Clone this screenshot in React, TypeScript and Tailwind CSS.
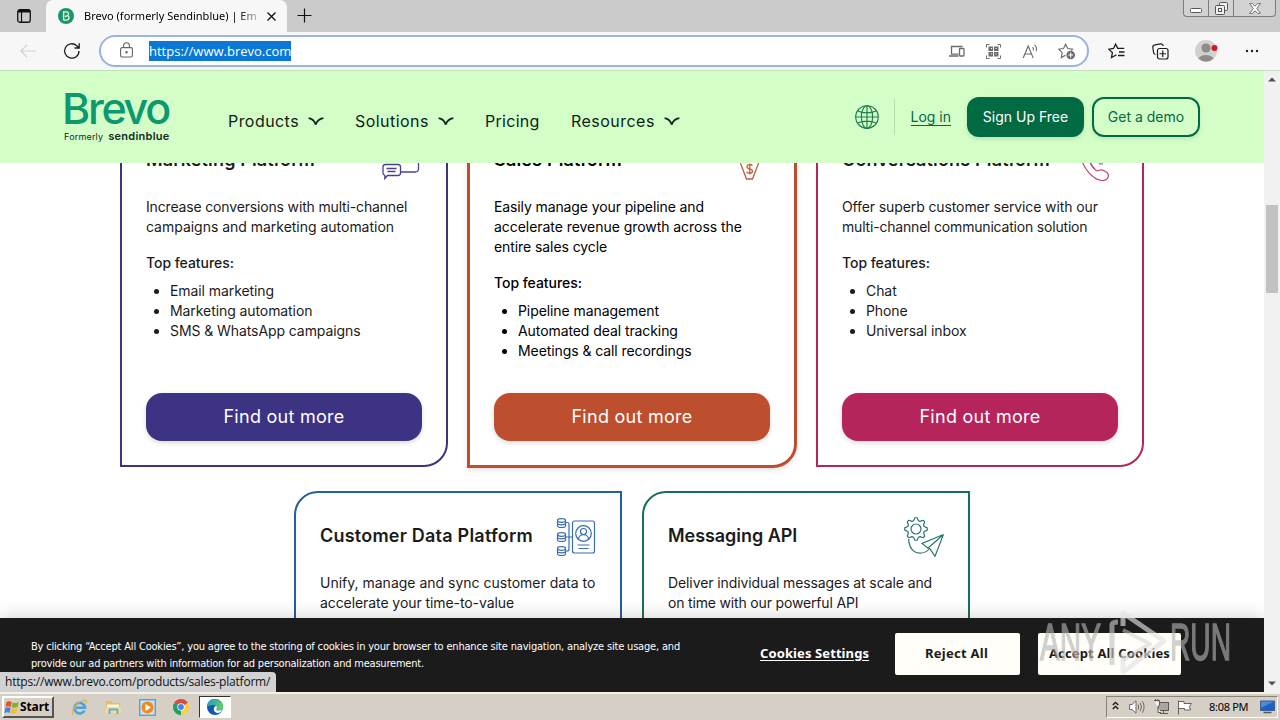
import type { ReactNode } from "react";

/* ---------- browser chrome ---------- */

function TabStrip() {
  return (
    <div className="flex h-[32px] items-start bg-[#cbcbcb]">
      <div className="flex h-full w-[46px] items-center justify-center">
        <svg width="14" height="14" viewBox="0 0 14 14" fill="none" stroke="#111" className="ml-[2px]">
          <rect x="0.75" y="0.75" width="12.5" height="12.5" rx="2" strokeWidth="1.3" />
          <path d="M1 2.2h12" strokeWidth="2.6" />
          <path d="M4.5 3v10" strokeWidth="1.2" />
        </svg>
      </div>
      <div className="flex h-full w-[241px] items-center rounded-t-[7px] bg-[#f7f7f7] pl-[12px]">
        <svg width="16" height="16" viewBox="0 0 16 16" className="shrink-0">
          <circle cx="8" cy="8" r="8" fill="#1a9765" />
          <path
            d="M5.6 12.2V3.9h3a1.9 1.9 0 0 1 1.2 3.4L7 8.6M9.6 7.5a2.4 2.4 0 0 1-1 4.6h-3"
            fill="none"
            stroke="#e9fbe9"
            strokeWidth="1.4"
          />
        </svg>
        <span className="ml-[10px] w-[175px] overflow-hidden whitespace-nowrap bg-linear-to-r from-black from-88% to-black/20 bg-clip-text font-['Noto_Sans',sans-serif] text-[11px] leading-[16px] text-transparent">
          Brevo (formerly Sendinblue) | Em
        </span>
        <svg width="9" height="9" viewBox="0 0 9 9" className="ml-[8px]" stroke="#111" strokeWidth="1.3">
          <path d="M.5.5l8 8M8.5.5l-8 8" />
        </svg>
      </div>
      <svg width="15" height="15" viewBox="0 0 15 15" className="mt-[8px] ml-[10px]" stroke="#111" strokeWidth="1.2">
        <path d="M7.5.5v14M.5 7.5h14" />
      </svg>
      <div className="mr-[4px] ml-auto flex h-[17px] w-[93px] rounded-b-[4px] border border-t-0 border-[#7c7c7c] bg-[#d2d2d2]">
        <div className="flex w-[25px] items-end justify-center border-r border-[#7c7c7c] pb-[3px]">
          <svg width="12" height="5" viewBox="0 0 12 5" fill="#fff" stroke="#555">
            <rect x="0.5" y="0.5" width="11" height="4" rx="1" />
          </svg>
        </div>
        <div className="flex w-[25px] items-center justify-center border-r border-[#7c7c7c]">
          <svg width="13" height="13" viewBox="0 0 13 13" fill="#eee" stroke="#555">
            <rect x="4.5" y="0.5" width="8" height="8" rx="1" />
            <rect x="0.5" y="3.5" width="9" height="9" rx="1" />
            <rect x="3.5" y="6.5" width="3" height="3" />
          </svg>
        </div>
        <div className="flex flex-1 items-center justify-center">
          <svg width="12" height="11" viewBox="0 0 12 11" fill="#fff" stroke="#666" strokeWidth="0.9">
            <path d="M.6.6h3L6 3.3 8.4.6h3L7.7 5.5l3.7 4.9h-3L6 7.7 3.6 10.400h-3l3.700-4.900z" />
          </svg>
        </div>
      </div>
    </div>
  );
}

function Toolbar() {
  return (
    <div className="flex h-[39px] items-center border-b border-[#c3dfba] bg-[#f7f7f7]">
      <svg width="16" height="14" viewBox="0 0 16 14" className="ml-[20px]" fill="none" stroke="#cfcfcf" strokeWidth="1.2">
        <path d="M7 .8L.9 7 7 13.2M1 7h15" />
      </svg>
      <svg width="18" height="18" viewBox="0 0 18 18" className="ml-[27px]" fill="none" stroke="#1c1c1c" strokeWidth="1.3">
        <path d="M16 9a7.2 7.2 0 1 1-2.3-5.300L16 5.800M16.200 1.300v4.700h-4.700" />
      </svg>
      <div className="ml-[18px] flex h-[32px] w-[990px] items-center rounded-full border-2 border-[#9cb3dc] bg-white pl-[19px]">
        <svg width="13" height="16" viewBox="0 0 13 16" className="-mt-[2px]" fill="none" stroke="#666" strokeWidth="1.1">
          <rect x="0.6" y="5.6" width="11.8" height="9.4" rx="1.5" />
          <path d="M3.6 5.5V3.6a2.900 2.900 0 0 1 5.800 0v1.900" />
          <circle cx="6.500" cy="10.300" r="0.700" fill="#666" />
        </svg>
        <span className="ml-[16px] h-[20px] bg-[#0a78d4] font-['Open_Sans','Noto_Sans',sans-serif] text-[13px] leading-[20px] text-white">
          https://www.brevo.com
        </span>
        <div className="mr-[11px] ml-auto flex items-center text-[#6b6b6b]">
          <svg width="16" height="12" viewBox="0 0 16 12" fill="none" stroke="currentColor" strokeWidth="1.3">
            <path d="M9.500 9.200H2.500V1.500h11M0 11h9.500" />
            <rect x="10.500" y="3.500" width="4.500" height="7.500" rx="0.800" />
          </svg>
          <svg width="15" height="15" viewBox="0 0 15 15" className="ml-[21px]" fill="none" stroke="currentColor">
            <path d="M.500 3.500v-3h3M11.500.500h3v3M14.500 11.500v3h-3M3.500 14.500h-3v-3" strokeWidth="1" />
            <path d="M2.500 2.500h4.500v4.500H2.500zM8 2.500h4.500v4.500H8zM2.500 8h4.500v4.500H2.500zM8 8h4.500v4.500H8z" fill="currentColor" stroke="none" />
            <path d="M5 4.500h1M9.500 4.500h1M5 10h1M9.500 10h1" stroke="#fff" />
          </svg>
          <svg width="17" height="15" viewBox="0 0 17 15" className="ml-[21px]" fill="none" stroke="currentColor" strokeWidth="1.100">
            <path d="M1.200 14L6.200 2 11.200 14M3 10h6.500M10.500 3.200q1.500 1.500.800 3.300M12.500.800q3 2.800 1.600 6.400" />
          </svg>
          <svg width="18" height="17" viewBox="0 0 18 17" className="ml-[19px]" fill="none" stroke="currentColor" strokeWidth="1.100">
            <path d="M7.500 12.200l-4.200 2.400.9-4.900L.800 6.200l4.700-.700L7.600 1.200l2.100 4.300 4.900.700-1.200 1.300" />
            <circle cx="12.700" cy="12" r="4.300" fill="currentColor" stroke="none" />
            <path d="M12.700 9.600v4.800M10.300 12h4.800" stroke="#fff" />
          </svg>
        </div>
      </div>
      <svg width="17" height="16" viewBox="0 0 17 16" className="ml-[19px]" fill="none" stroke="#1c1c1c" strokeWidth="1.300">
        <path d="M8.500 11.800L3.500 14.500l.9-4.900L.900 6.200l4.600-.700L7.600 1.200l2.100 4.200h6.500M11 9h5.500M10 12.500h6.500" />
      </svg>
      <svg width="17" height="17" viewBox="0 0 17 17" className="ml-[27px]" fill="none" stroke="#1c1c1c" strokeWidth="1.200">
        <path d="M3.500 11.500A2.500 2.500 0 0 1 1.500 9L.800 4.500A2.500 2.500 0 0 1 3 1.800L8.500.900A2.500 2.500 0 0 1 11.300 3" />
        <rect x="5.500" y="5.500" width="10.500" height="10.500" rx="2" />
        <path d="M10.750 7.500v6.500M7.500 10.750h6.500" />
      </svg>
      <svg width="24" height="22" viewBox="0 0 24 22" className="ml-[26px]">
        <circle cx="11" cy="11" r="11" fill="#d3d1cf" />
        <circle cx="11" cy="8" r="4.600" fill="#8e8b89" />
        <path d="M3.500 18.500a8 5.500 0 0 1 15 0A11 11 0 0 1 3.500 18.500z" fill="#8e8b89" />
        <circle cx="19.500" cy="8" r="3" fill="#d81324" />
      </svg>
      <svg width="14" height="4" viewBox="0 0 14 4" className="ml-[26px]" fill="#1c1c1c">
        <circle cx="2" cy="2" r="1.200" />
        <circle cx="7" cy="2" r="1.200" />
        <circle cx="12" cy="2" r="1.200" />
      </svg>
    </div>
  );
}

function Scrollbar() {
  return (
    <div className="flex w-[16px] shrink-0 flex-col items-center bg-[#f1f1f1]">
      <svg width="8" height="5" viewBox="0 0 8 5" className="mt-[6px]">
        <path d="M0 4.500L4 .500l4 4z" fill="#505050" />
      </svg>
      <div className="mt-[123px] h-[88px] w-[12px] bg-[#c1c1c1]" />
      <svg width="8" height="5" viewBox="0 0 8 5" className="mt-auto mb-[6px]">
        <path d="M0 .500L4 4.500l4-4z" fill="#505050" />
      </svg>
    </div>
  );
}

/* ---------- site header ---------- */

function Chevron() {
  return (
    <svg width="16" height="9" viewBox="0 0 16 9" className="mt-[1px] ml-[9px]" fill="none" stroke="#0a2a1c" strokeWidth="1.700">
      <path d="M.600 1.100C4.500 1.700 6.700 4 7.700 7.800M15.400 1.100C11.500 1.700 8.800 4 7.700 7.800" />
    </svg>
  );
}

function SiteHeader() {
  return (
    <header className="relative z-10 flex h-[92px] shrink-0 bg-[#d4fec8] font-['Inter',sans-serif]">
      <div className="ml-[64px] w-[110px] pt-[22px] whitespace-nowrap">
        <div className="-ml-[2px] h-[37px] text-[43px] leading-[31px] font-medium tracking-[-2.300px] text-[#0b996e]">Brevo</div>
        <div className="flex items-baseline gap-[5px] text-[#122a1e]">
          <span className="text-[9px] leading-[12px] tracking-[0.180px]">Formerly</span>
          <span className="text-[11px] leading-[12px] font-semibold tracking-[0.260px]">sendinblue</span>
        </div>
      </div>
      <nav className="ml-[54px] flex h-full items-center pt-[7px] text-[16px] text-[#0c1f15]">
        <a className="flex w-[127px] items-center tracking-[0.440px]">Products<Chevron /></a>
        <a className="flex w-[130px] items-center tracking-[0.450px]">Solutions<Chevron /></a>
        <a className="w-[86px] tracking-[0.280px]">Pricing</a>
        <a className="flex items-center tracking-[0.470px]">Resources<Chevron /></a>
      </nav>
      <div className="mr-[64px] ml-auto flex items-center text-[14px] text-[#006a43]">
        <svg width="24" height="24" viewBox="0 0 24 24" fill="none" stroke="#1d7d50" strokeWidth="1.150">
          <circle cx="12" cy="12" r="11.300" />
          <ellipse cx="12" cy="12" rx="5.600" ry="11.300" />
          <path d="M.700 12h22.600M12 .700v22.600M2.600 6q9.400 3.600 18.800 0M2.600 18q9.400-3.600 18.800 0" />
        </svg>
        <div className="ml-[15px] h-[36px] w-px bg-[#b5dfae]" />
        <a className="ml-[16px] h-[18px] border-b border-[#006a43] leading-[18px]">Log in</a>
        <button className="ml-[16px] h-[40px] w-[117px] rounded-[12px] bg-[#006a43] pb-px text-white shadow-[0_2px_4px_rgba(0,60,30,0.15)]">
          Sign Up Free
        </button>
        <button className="ml-[8px] h-[40px] w-[108px] rounded-[12px] border-2 border-[#006a43] pb-px shadow-[0_2px_4px_rgba(0,60,30,0.12)]">
          Get a demo
        </button>
      </div>
    </header>
  );
}

/* ---------- product cards ---------- */

function Card({
  className,
  title,
  titleClass,
  icon,
  text,
  features,
  buttonClass,
}: {
  className: string;
  title: string;
  titleClass: string;
  icon: ReactNode;
  text: [string, string][];
  features?: string[];
  buttonClass?: string;
}) {
  return (
    <article className={`flex shrink-0 flex-col bg-white p-[24px] text-[14px] leading-[20px] text-[#1b1b1b] ${className}`}>
      <div className="flex h-[40px] shrink-0 items-center justify-between">
        <h3 className={`-mt-[2px] text-[18px] font-semibold whitespace-nowrap ${titleClass}`}>{title}</h3>
        {icon}
      </div>
      <p className="mt-[16px] whitespace-nowrap">
        {text.map(([line, tracking]) => (
          <span key={line} className={`block ${tracking}`}>{line}</span>
        ))}
      </p>
      {features && (
        <>
          <p className="mt-[16px] font-medium tracking-[-0.040px]">Top features:</p>
          <ul className="mt-[8px] list-disc pl-[24px] tracking-[-0.080px]">
            {features.map((f) => (
              <li key={f}>{f}</li>
            ))}
          </ul>
          <button className={`mt-auto h-[48px] shrink-0 rounded-[16px] text-[18px] tracking-[0.260px] text-white shadow-[0_2px_5px_rgba(0,0,0,0.15)] ${buttonClass}`}>
            Find out more
          </button>
        </>
      )}
    </article>
  );
}

const iconProps = { width: 40, height: 40, viewBox: "0 0 40 40", fill: "none", strokeWidth: 1.3 };

const ChatIcon = () => (
  <svg {...iconProps} stroke="#4a4090">
    <path d="M19 31H33.500a3 3 0 0 0 3-3V8a4 4 0 0 0-4-4H10a4 4 0 0 0-4 4v12" />
    <path d="M3.500 23.500h12.500a2.500 2.500 0 0 1 2.500 2.500v6a2.500 2.500 0 0 1-2.500 2.500H5.500l-2.700 3v-3.200a2.500 2.500 0 0 1-1.800-2.300v-6a2.500 2.500 0 0 1 2.500-2.500zM4.500 27.500h10M5.500 30.500h8" />
  </svg>
);

const TieIcon = () => (
  <svg {...iconProps} stroke="#c05f42">
    <path d="M8.500 17l8 21h6L30.500 17" />
    <path d="M22.500 24.500c-1-1.500-5.500-1.500-5.500 1.200 0 3 5.500 1.500 5.500 4.500 0 2.600-5 2.600-5.800.500M19.800 22.500v11" />
  </svg>
);

const PhoneIcon = () => (
  <svg {...iconProps} stroke="#bd4270" strokeWidth={1.200}>
    <path d="M3 16C5 27 15 39.500 25 39.500c3.500 0 6-3.200 5.300-6-1-2.200-6-5.500-8.500-4.500-1.500.500-1.800 1.500-3.500.500-3-2-5.500-6-6.500-10" />
    <path d="M11 19c1 3.500 3 6.500 5.500 8.500M20 20l2 3h3" />
  </svg>
);

const DataIcon = () => (
  <svg {...iconProps} stroke="#3a6fae" strokeWidth={1.200}>
    {[6, 20, 34].map((y) => (
      <g key={y}>
        <ellipse cx="5.500" cy={y - 2.500} rx="4" ry="1.800" />
        <path d={`M1.500 ${y - 2.500}v5.200c0 2.400 8 2.400 8 0v-5.200M1.500 ${y}c0 2.400 8 2.400 8 0`} />
      </g>
    ))}
    <path d="M9.500 5.500h1.500a2 2 0 0 1 2 2v24.500a2 2 0 0 1-2 2H9.500M9.500 20H16" />
    <rect x="16.500" y="4" width="22" height="32" rx="2" />
    <circle cx="27.500" cy="16.500" r="7.800" />
    <circle cx="27.500" cy="14.500" r="3" />
    <path d="M22.500 22.500c0-6.500 10-6.500 10 0M21.500 28h12M22.500 31.500h10" />
  </svg>
);

const gear = Array.from({ length: 32 }, (_, i) => {
  const r = i % 4 < 2 ? 11.3 : 8.6;
  const a = ((i - 0.5) / 32) * Math.PI * 2 - Math.PI / 2;
  return `${(12 + r * Math.cos(a)).toFixed(2)},${(12 + r * Math.sin(a)).toFixed(2)}`;
}).join(" ");

const ApiIcon = () => (
  <svg {...iconProps} stroke="#2b7673" strokeWidth={1.200}>
    <polygon points={gear} strokeLinejoin="round" />
    <circle cx="12" cy="12" r="5" />
    <path d="M4.800 22v2.500c1 8 6 11.700 11.200 11.700q6 0 10-5.200" />
    <path d="M39.500 17.500L18 26.500l6 4.500zM39.500 17.500L24 31v1M39.500 17.500L31 39.300l-5-7.500" />
  </svg>
);

function Cards() {
  return (
    <section className="h-[529px] shrink-0 overflow-hidden bg-white font-['Inter',sans-serif]">
      <div className="-mt-[48px] ml-[120px] flex items-start gap-[20px]">
        <Card
          className="h-[352px] w-[328px] rounded-tl-[24px] rounded-br-[24px] border-2 border-[#3d3383]"
          title="Marketing Platform"
          titleClass="tracking-[0.150px]"
          icon={<ChatIcon />}
          text={[
            ["Increase conversions with multi-channel", "tracking-[-0.160px]"],
            ["campaigns and marketing automation", "tracking-[-0.020px]"],
          ]}
          features={["Email marketing", "Marketing automation", "SMS & WhatsApp campaigns"]}
          buttonClass="bg-[#3d3383]"
        />
        <Card
          className="-m-px h-[354px] w-[330px] rounded-tl-[24px] rounded-br-[24px] border-[3px] border-[#be4f2e] text-black shadow-[0_2px_5px_rgba(0,0,0,0.12)]"
          title="Sales Platform"
          titleClass="tracking-[0.180px]"
          icon={<TieIcon />}
          text={[
            ["Easily manage your pipeline and", "tracking-[-0.110px]"],
            ["accelerate revenue growth across the", "tracking-[-0.050px]"],
            ["entire sales cycle", "tracking-[-0.080px]"],
          ]}
          features={["Pipeline management", "Automated deal tracking", "Meetings & call recordings"]}
          buttonClass="bg-[#be4f2e]"
        />
        <Card
          className="h-[352px] w-[328px] rounded-tl-[24px] rounded-br-[24px] border-2 border-[#b5245b]"
          title="Conversations Platform"
          titleClass="tracking-[0.170px]"
          icon={<PhoneIcon />}
          text={[
            ["Offer superb customer service with our", "tracking-[-0.110px]"],
            ["multi-channel communication solution", "tracking-[-0.190px]"],
          ]}
          features={["Chat", "Phone", "Universal inbox"]}
          buttonClass="bg-[#b5245b]"
        />
      </div>
      <div className="mt-[24px] ml-[294px] flex items-start gap-[20px]">
        <Card
          className="h-[352px] w-[328px] rounded-tl-[24px] border-2 border-[#23609f]"
          title="Customer Data Platform"
          titleClass="tracking-[0.220px]"
          icon={<DataIcon />}
          text={[
            ["Unify, manage and sync customer data to", "tracking-[0px]"],
            ["accelerate your time-to-value", "tracking-[-0.080px]"],
          ]}
        />
        <Card
          className="h-[352px] w-[328px] rounded-tl-[24px] border-2 border-[#17705f]"
          title="Messaging API"
          titleClass="tracking-[-0.050px]"
          icon={<ApiIcon />}
          text={[
            ["Deliver individual messages at scale and", "tracking-[-0.100px]"],
            ["on time with our powerful API", "tracking-[-0.170px]"],
          ]}
        />
      </div>
    </section>
  );
}

/* ---------- overlays ---------- */

function CookieBanner() {
  return (
    <div className="absolute bottom-0 left-0 z-20 flex h-[74px] w-full bg-[#1b1b1b] shadow-[0_0_18px_rgba(0,0,0,0.2)]">
      <p className="ml-[31px] w-[670px] pt-[20px] font-['DejaVu_Sans_Condensed','DejaVu_Sans',sans-serif] text-[11px] leading-[17px] whitespace-nowrap text-white">
        <span className="block tracking-[-0.184px]">
          By clicking “Accept All Cookies”, you agree to the storing of cookies in your browser to enhance site navigation, analyze site usage, and
        </span>
        <span className="block tracking-[-0.210px]">
          provide our ad partners with information for ad personalization and measurement.
        </span>
      </p>
      <div className="ml-[59px] flex h-[71px] items-center font-['Noto_Sans',sans-serif] text-[13px] leading-[15px] font-bold">
        <a className="w-[135px] tracking-[0.100px] text-white underline underline-offset-2">Cookies Settings</a>
        <button className="h-[42px] w-[125px] rounded-[2px] bg-[#fffef9] pr-[2px] tracking-[0.280px] text-[#1b1b1b]">Reject All</button>
        <button className="ml-[18px] h-[42px] w-[143px] rounded-[2px] bg-[#fffef9] tracking-[0.150px] text-[#1b1b1b]">
          Accept All Cookies
        </button>
      </div>
    </div>
  );
}

function Watermark() {
  return (
    <svg width="200" height="70" viewBox="0 0 200 70" className="pointer-events-none absolute top-[606px] left-[1036px] z-30">
      <g fill="#b4b4b4" stroke="#b4b4b4" strokeWidth="1.600" opacity="0.620" fontFamily="'Liberation Sans', sans-serif" fontSize="51">
        <text x="4" y="54" textLength="61" lengthAdjust="spacingAndGlyphs">ANY</text>
        <text x="134" y="54" textLength="61" lengthAdjust="spacingAndGlyphs">RUN</text>
      </g>
      <g fill="none" strokeLinejoin="round">
        <path d="M76 59V19q0-3 6-3" stroke="#c4c4c4" strokeOpacity="0.650" strokeWidth="5" />
        <path d="M87 20V7l41 28-41 31V47" stroke="#e2e2e2" strokeOpacity="0.650" strokeWidth="5" />
        <path d="M87 24l27 14-27 16" stroke="#cfcfcf" strokeOpacity="0.500" strokeWidth="4" />
      </g>
    </svg>
  );
}

/* ---------- taskbar ---------- */

function Taskbar() {
  return (
    <footer className="flex h-[28px] items-center border-t-2 border-[#f3f1ec] bg-[#d6cfc6]">
      <div className="ml-[2px] flex h-[22px] w-[52px] items-center border-2 border-t-white border-r-[#555] border-b-[#555] border-l-white bg-[#d6cfc6]">
        <svg width="16" height="15" viewBox="0 0 16 15">
          <path d="M2.500 2Q5 .500 7.600 2L6.700 7Q4 5.600 1.500 7z" fill="#e2562a" />
          <path d="M8.600 2.500q3 1.300 6-.500l-1 5q-3 1.500-6 .200z" fill="#7fb52e" />
          <path d="M1.300 8q2.600-1.500 5.200 0L5.600 13Q3 11.600.400 13z" fill="#3f86d6" />
          <path d="M7.500 8.200q3 1.400 6-.100l-1 5q-3 1.500-6 .300z" fill="#f5c02a" />
        </svg>
        <span className="font-['Noto_Sans',sans-serif] text-[12px] leading-[16px] font-bold tracking-[-0.120px] text-black">Start</span>
      </div>
      <svg width="17" height="17" viewBox="0 0 17 17" className="ml-[17px]" fill="none">
        <path d="M13.500 11.500a5.300 5.300 0 1 1 .500-2.800H5" stroke="#4aa3dc" strokeWidth="2.500" />
        <path d="M2.500 15.500C-1 13 5 4 12 1.500c3-1 4 .500 2.800 3" stroke="#e3b13c" strokeWidth="1.300" />
      </svg>
      <svg width="17" height="16" viewBox="0 0 17 16" className="ml-[17px]">
        <path d="M1 2h6l1 2h7v10H1z" fill="#e0c070" />
        <path d="M2 5.500h12V8H2z" fill="#fdf6d8" />
        <path d="M1 8h15v6H1z" fill="#f4dc8c" />
        <path d="M4.500 15v-4.500h8V15" fill="none" stroke="#63aee3" strokeWidth="2" />
      </svg>
      <svg width="17" height="17" viewBox="0 0 17 17" className="ml-[17px]">
        <rect x="0.700" y="0.700" width="15.600" height="15.600" fill="#c9e0f3" stroke="#5b9bd3" strokeWidth="1.300" />
        <circle cx="8.500" cy="8.500" r="6" fill="#f08a1d" />
        <path d="M6.500 5v7l5.500-3.500z" fill="#fff" />
      </svg>
      <svg width="16" height="16" viewBox="0 0 16 16" className="ml-[17px]">
        <path d="M8 8L1.070 4A8 8 0 0 1 14.930 4z" fill="#dd4b3e" />
        <path d="M8 8V16A8 8 0 0 1 1.070 4z" fill="#1ba261" />
        <path d="M8 8L14.930 4A8 8 0 0 1 8 16z" fill="#fdd03b" />
        <circle cx="8" cy="8" r="3.700" fill="#fff" />
        <circle cx="8" cy="8" r="2.900" fill="#4285f4" />
      </svg>
      <div className="ml-[10px] flex h-[22px] w-[32px] items-center justify-center border border-t-[#333] border-r-white border-b-white border-l-[#333] bg-[#fdfdfc]">
        <svg width="16" height="16" viewBox="0 0 16 16">
          <defs>
            <linearGradient id="edgeTop" x1="0" y1="0" x2="1" y2="0.500">
              <stop offset="0" stopColor="#1c93d8" />
              <stop offset="1" stopColor="#5fd25a" />
            </linearGradient>
          </defs>
          <circle cx="8" cy="8" r="8" fill="#0d5bb0" />
          <path d="M0 8a8 8 0 0 1 16-.500c0 3-2.500 4-4.600 4-1.800 0-2.400-.600-2-1.300C10.500 8.500 9.500 6 7 6 3.500 6 .500 7 0 8z" fill="url(#edgeTop)" />
          <path d="M9.200 6.800c1.200 1.200.600 2.700.200 3.300-.300.900.400 1.500 2 1.500 1.700 0 3-.500 4.100-1.500C14.700 12.500 13 14 11 14c-3 0-4.800-2.500-4-5 .400-1.100 1.200-1.900 2.200-2.200z" fill="#fff" />
        </svg>
      </div>
      <div className="mr-[2px] ml-auto flex h-[22px] w-[172px] items-center border border-t-[#88837b] border-r-white border-b-white border-l-[#88837b]">
        <svg width="7" height="9" viewBox="0 0 7 9" className="-mt-[4px] ml-[5px]" fill="none" stroke="#111" strokeWidth="1.300">
          <path d="M.800 4L3.500 1.300 6.200 4M.800 8L3.500 5.300 6.200 8" />
        </svg>
        <svg width="16" height="14" viewBox="0 0 16 14" className="ml-[10px]" stroke="#6d6a66">
          <path d="M.600 4.500h2.500L7 .800v12.400L3.100 9.500H.600z" fill="#fff" />
          <path d="M9 4.500q1.500 2.500 0 5M11.200 2.800q2.500 4.200 0 8.400M13.400 1.200q3.400 5.800 0 11.600" fill="none" />
        </svg>
        <svg width="17" height="16" viewBox="0 0 17 16" className="ml-[8px]" stroke="#5e5b57">
          <rect x="5.500" y="3.500" width="10" height="8" fill="#aaa7a2" />
          <path d="M7 14.500h8M10.500 12v2" fill="none" />
          <path d="M1 1.500h5.500V6L5 7.500v6h3M2.500 0v2.500M5 0v2.500" fill="#f3f1ed" />
        </svg>
        <svg width="16" height="15" viewBox="0 0 16 15" className="ml-[7px]" fill="#fff" stroke="#66635e">
          <path d="M1.500.500v14M1.500 1.500h5.500v2h7.500l-2 3 1 3.500H7.500V8.500h-6z" />
        </svg>
        <span className="ml-[16px] font-['Noto_Sans',sans-serif] text-[11px] leading-[14px] tracking-[-0.300px] text-black">8:08 PM</span>
        <svg width="15" height="14" viewBox="0 0 15 14" className="ml-[12px]">
          <path d="M.500 1h14v9.500H.500z" fill="#1c62c4" stroke="#3b5f92" />
          <path d="M1 1.500h13L1 8z" fill="#4a8ad8" />
          <path d="M3.500 12.500h8" stroke="#555" strokeWidth="1.500" />
        </svg>
      </div>
    </footer>
  );
}

export default function App() {
  return (
    <div className="relative flex h-[720px] w-[1280px] flex-col overflow-hidden bg-white">
      <TabStrip />
      <Toolbar />
      <div className="flex h-[621px]">
        <main className="relative flex w-[1264px] flex-col overflow-hidden">
          <SiteHeader />
          <Cards />
          <CookieBanner />
          <div className="absolute bottom-0 left-0 z-30 h-[20px] w-[276px] rounded-tr-[4px] bg-[#d2d2d2] pl-[5px] font-['Open_Sans','Noto_Sans',sans-serif] text-[12px] leading-[20px] tracking-[-0.210px] whitespace-nowrap text-[#111]">
            https://www.brevo.com/products/sales-platform/
          </div>
        </main>
        <Scrollbar />
      </div>
      <Taskbar />
      <Watermark />
    </div>
  );
}
